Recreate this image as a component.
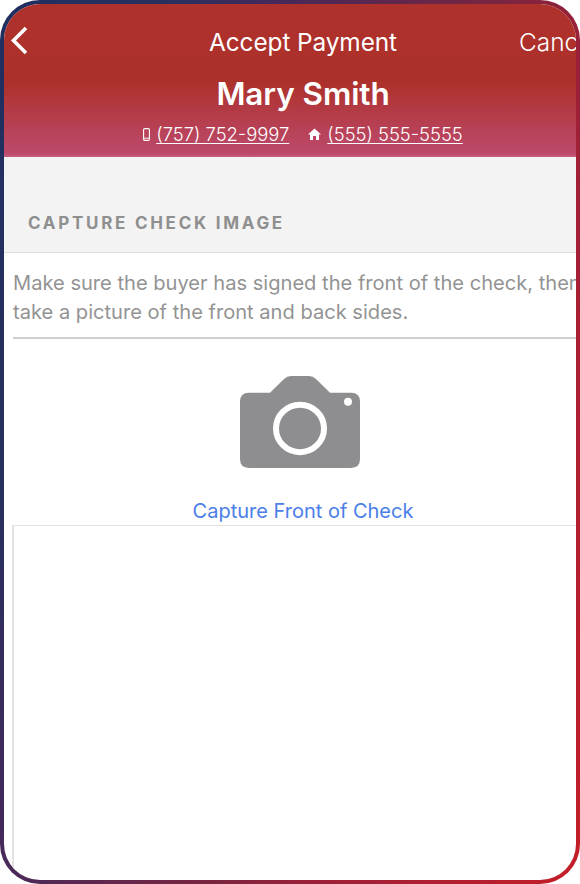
<div class="frame">
  <div class="screen">
    <div class="content">
      <header>
        <div class="nav">
          <svg class="back" viewBox="0 0 20 32" width="20" height="32" aria-hidden="true"><path d="M17 3 L4.5 15.5 L17 28" fill="none" stroke="#fff" stroke-width="3.6"/></svg>
          <span class="title">Accept Payment</span>
          <span class="cancel">Cancel</span>
        </div>
        <div class="name">Mary Smith</div>
        <div class="phones">
          <svg width="7" height="13" viewBox="0 0 7 13" aria-hidden="true"><rect x="0.6" y="0.6" width="5.8" height="11.8" rx="1.2" fill="none" stroke="#fff" stroke-width="1.1"/><path d="M1 10.2h5" stroke="#fff" stroke-width="0.9"/></svg>
          <a href="#m">(757) 752-9997</a>
          <svg class="home" width="13" height="12" viewBox="0 0 13 12" aria-hidden="true"><path d="M6.5 0.4 L13 6.4 H11 V12 H8 V8 H5 V12 H2 V6.4 H0 Z" fill="#fff"/></svg>
          <a href="#h">(555) 555-5555</a>
        </div>
      </header>
      <div class="section">CAPTURE CHECK IMAGE</div>
      <p class="help">Make sure the buyer has signed the front of the check, then take a picture of the front and back sides.</p>
      <div class="capture">
        <svg width="120" height="92" viewBox="0 0 120 93" preserveAspectRatio="none" aria-hidden="true">
          <path fill="#8e8e90" d="M9 17 H30 L44 3 Q47 0 51 0 H69 Q73 0 76 3 L90 17 H111 Q120 17 120 26 V84 Q120 93 111 93 H9 Q0 93 0 84 V26 Q0 17 9 17 Z"/>
          <circle cx="60" cy="53" r="24" fill="none" stroke="#fff" stroke-width="6"/>
          <circle cx="108" cy="26" r="4" fill="#fff"/>
        </svg>
        <span class="link">Capture Front of Check</span>
      </div>
      <div class="image-box"></div>
    </div>
  </div>
</div>

<style>
  :global(body) { margin: 0; background: #fff; }
  .frame {
    width: 580px;
    height: 884px;
    box-sizing: border-box;
    padding: 4px;
    border-radius: 40px;
    background: linear-gradient(108deg, #1f2f60 0%, #28305f 19%, #45295a 32%, #7a2540 58%, #9c2038 69%, #c41e28 100%);
    font-family: Inter, "Liberation Sans", sans-serif;
  }
  .screen {
    height: 100%;
    border-radius: 36px;
    overflow: hidden;
    background: #fff;
  }
  .content { width: 598px; height: 100%; display: flex; flex-direction: column; }
  header {
    height: 153px;
    box-sizing: border-box;
    flex: none;
    color: #fff;
    background: linear-gradient(180deg, #af312b 0%, #ac302a 50%, #bd4a6c 98%, #c9607e 100%);
    display: flex;
    flex-direction: column;
  }
  .nav {
    height: 60px;
    padding-top: 16px;
    box-sizing: border-box;
    display: flex;
    justify-content: center;
    position: relative;
    flex: none;
  }
  .title { font-size: 24.4px; line-height: 44px; height: 44px; letter-spacing: -0.1px; }
  .back { position: absolute; left: 5px; top: 21px; }
  .cancel { position: absolute; left: 515px; top: 16px; font-size: 24.4px; line-height: 44px; font-weight: 300; }
  .name { font-size: 31.5px; font-weight: 600; line-height: 36px; text-align: center; margin-top: 12px; letter-spacing: -0.1px; }
  .phones {
    display: flex;
    justify-content: center;
    align-items: center;
    margin-top: 11px;
    font-size: 18.4px;
    line-height: 22px;
    font-weight: 300;
  }
  .phones svg { margin-right: 6px; }
  .phones .home { margin-left: 19px; margin-right: 6px; }
  .phones a { color: #fff; text-decoration: underline; text-underline-offset: 2px; text-decoration-thickness: 1px; }
  .section {
    height: 96px;
    box-sizing: border-box;
    flex: none;
    background: #f3f3f3;
    border-bottom: 1px solid #dedede;
    padding: 56px 0 0 24px;
    font-size: 17px;
    line-height: 20px;
    font-weight: 700;
    letter-spacing: 2.72px;
    color: #8f8f8f;
  }
  .help {
    margin: 16px 0 0 9px;
    padding-bottom: 10px;
    border-bottom: 2px solid #d0d0d0;
    font-size: 20.1px;
    line-height: 29px;
    color: #939393;
    width: 589px;
    flex: none;
    box-sizing: border-box;
    padding-right: 6px;
  }
  .capture { display: flex; flex-direction: column; align-items: center; padding-top: 37px; flex: none; }
  .capture svg { margin-right: 6px; }
  .link { color: #4a7ee8; font-size: 20px; line-height: 28px; margin-top: 29px; }
  .image-box {
    margin: 0 0 0 8px;
    flex: 1;
    border: 1px solid #e2e2e2;
    border-width: 1px 0 0 2px;
  }
</style>
